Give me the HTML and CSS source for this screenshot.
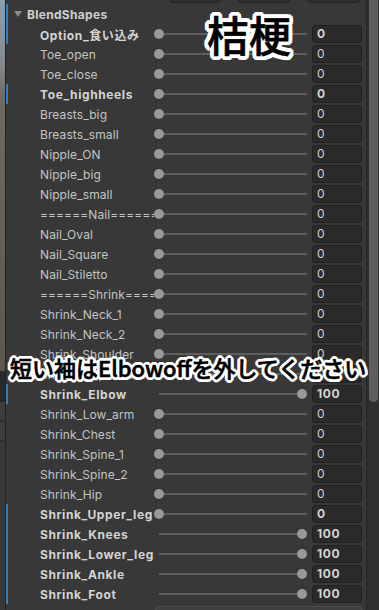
FILE: index.html
```html
<!DOCTYPE html>
<html lang="ja">
  <head>
    <meta charset="UTF-8" />
    <meta name="viewport" content="width=device-width, initial-scale=1.0" />
    <title>BlendShapes</title>
    <link rel="stylesheet" href="styles.css">
  </head>
  <body>
    <div class="scene"></div>
    <main class="inspector">
      <div class="toolbar">
        <span class="tool-btn first"></span>
        <span class="tool-btn"></span>
        <span class="tool-btn"></span>
      </div>
      <div class="row head mod"><span class="arrow"></span><span class="title">BlendShapes</span></div>
      <div class="row mod bold"><span class="label">Option_食い込み</span><div class="slider"><i class="knob"></i></div><span class="field">0</span></div>
      <div class="row"><span class="label">Toe_open</span><div class="slider"><i class="knob"></i></div><span class="field">0</span></div>
      <div class="row"><span class="label">Toe_close</span><div class="slider"><i class="knob"></i></div><span class="field">0</span></div>
      <div class="row mod bold"><span class="label">Toe_highheels</span><div class="slider"><i class="knob"></i></div><span class="field">0</span></div>
      <div class="row"><span class="label">Breasts_big</span><div class="slider"><i class="knob"></i></div><span class="field">0</span></div>
      <div class="row"><span class="label">Breasts_small</span><div class="slider"><i class="knob"></i></div><span class="field">0</span></div>
      <div class="row"><span class="label">Nipple_ON</span><div class="slider"><i class="knob"></i></div><span class="field">0</span></div>
      <div class="row"><span class="label">Nipple_big</span><div class="slider"><i class="knob"></i></div><span class="field">0</span></div>
      <div class="row"><span class="label">Nipple_small</span><div class="slider"><i class="knob"></i></div><span class="field">0</span></div>
      <div class="row"><span class="label">======Nail=========</span><div class="slider"><i class="knob"></i></div><span class="field">0</span></div>
      <div class="row"><span class="label">Nail_Oval</span><div class="slider"><i class="knob"></i></div><span class="field">0</span></div>
      <div class="row"><span class="label">Nail_Square</span><div class="slider"><i class="knob"></i></div><span class="field">0</span></div>
      <div class="row"><span class="label">Nail_Stiletto</span><div class="slider"><i class="knob"></i></div><span class="field">0</span></div>
      <div class="row"><span class="label">======Shrink========</span><div class="slider"><i class="knob"></i></div><span class="field">0</span></div>
      <div class="row"><span class="label">Shrink_Neck_1</span><div class="slider"><i class="knob"></i></div><span class="field">0</span></div>
      <div class="row"><span class="label">Shrink_Neck_2</span><div class="slider"><i class="knob"></i></div><span class="field">0</span></div>
      <div class="row"><span class="label">Shrink_Shoulder</span><div class="slider"><i class="knob"></i></div><span class="field">0</span></div>
      <div class="row"><span class="label">Shrink_Upper_arm</span><div class="slider"><i class="knob"></i></div><span class="field">0</span></div>
      <div class="row mod bold"><span class="label">Shrink_Elbow</span><div class="slider max"><i class="knob"></i></div><span class="field">100</span></div>
      <div class="row"><span class="label">Shrink_Low_arm</span><div class="slider"><i class="knob"></i></div><span class="field">0</span></div>
      <div class="row"><span class="label">Shrink_Chest</span><div class="slider"><i class="knob"></i></div><span class="field">0</span></div>
      <div class="row"><span class="label">Shrink_Spine_1</span><div class="slider"><i class="knob"></i></div><span class="field">0</span></div>
      <div class="row"><span class="label">Shrink_Spine_2</span><div class="slider"><i class="knob"></i></div><span class="field">0</span></div>
      <div class="row"><span class="label">Shrink_Hip</span><div class="slider"><i class="knob"></i></div><span class="field">0</span></div>
      <div class="row mod bold"><span class="label">Shrink_Upper_leg</span><div class="slider"><i class="knob"></i></div><span class="field">0</span></div>
      <div class="row mod bold"><span class="label">Shrink_Knees</span><div class="slider max"><i class="knob"></i></div><span class="field">100</span></div>
      <div class="row mod bold"><span class="label">Shrink_Lower_leg</span><div class="slider max"><i class="knob"></i></div><span class="field">100</span></div>
      <div class="row mod bold"><span class="label">Shrink_Ankle</span><div class="slider max"><i class="knob"></i></div><span class="field">100</span></div>
      <div class="row mod bold"><span class="label">Shrink_Foot</span><div class="slider max"><i class="knob"></i></div><span class="field">100</span></div>
      <div class="row next"><span class="next-field"></span></div>

      <!-- caption overlays -->
      <p class="caption name">桔梗</p>
      <p class="caption note">短い袖はElbowoffを外してください</p>
    </main>
    <div class="scrollbar"><span class="thumb"></span></div>
  </body>
</html>
```

FILE: styles.css
```css
* { box-sizing: border-box; }
html, body { height: 100%; }
body {
  margin: 0;
  background: #383838;
  color: #c4c4c4;
  font-family: Inter, "Noto Sans CJK JP", sans-serif;
  font-size: 12px;
  display: flex;
  overflow: hidden;
}
.scene {
  width: 6px;
  flex: none;
  border-right: 1px solid #232323;
  background: linear-gradient(#8e9db2 0, #868b92 60px, #6e6862 100px, #5c5651 370px, #2a2a2a 372px, #2a2a2a 400px, #1f1f1f 401px, #3c3c3c 402px, #3c3c3c 420px, #1f1f1f 421px, #3c3c3c 422px, #3c3c3c 440px, #1f1f1f 441px, #383838 442px);
}
.inspector {
  flex: 1;
  position: relative;
  padding-top: 4px;
}
.toolbar { position: absolute; top: -10px; left: 164px; display: flex; gap: 18px; }
.tool-btn {
  width: 52px;
  height: 13px;
  background: #2e2e2e;
  border: 1px solid #222;
  border-radius: 3px;
}
.tool-btn.first { width: 50px; }
.row {
  height: 20px;
  display: flex;
  align-items: center;
  border-left: 2px solid transparent;
}
.row.mod { border-left-color: #2f7fc1; }
.head { padding-left: 6px; }
.arrow {
  width: 0;
  height: 0;
  border-left: 4px solid transparent;
  border-right: 4px solid transparent;
  border-top: 6px solid #8a8a8a;
  margin-right: 5px;
}
.title { font-weight: 700; color: #cfcfcf; letter-spacing: 0.3px; }
.label {
  width: 146px;
  padding-left: 32px;
  white-space: nowrap;
  overflow: hidden;
  letter-spacing: 0.1px;
}
.bold .label, .bold .field { font-weight: 700; color: #d4d4d4; letter-spacing: 0.6px; }
.slider {
  width: 153px;
  height: 10px;
  position: relative;
  flex: none;
}
.slider::before {
  content: "";
  position: absolute;
  left: 5px;
  right: 0;
  top: 4px;
  height: 2px;
  background: #5e5e5e;
}
.knob {
  position: absolute;
  left: 0;
  top: 0;
  width: 10px;
  height: 10px;
  border-radius: 50%;
  background: #999;
}
.slider.max .knob { left: auto; right: 0; }
.field {
  margin-left: 5px;
  width: 50px;
  height: 18px;
  background: #2a2a2a;
  border: 1px solid #212121;
  border-radius: 3px;
  padding-left: 4px;
  line-height: 16px;
  color: #d2d2d2;
}
.next { align-items: flex-start; padding-top: 2px; }
.next-field {
  margin-left: 147px;
  width: 207px;
  height: 18px;
  background: #3f3f3f;
  border: 1px solid #4c4c4c;
  border-radius: 3px;
}
.caption {
  position: absolute;
  margin: 0;
  color: #000;
  font-family: "Noto Sans CJK JP", sans-serif;
  font-weight: 500;
  white-space: nowrap;
  -webkit-text-stroke: 0.6px #000;
  text-shadow:
    3px 0 #fff, -3px 0 #fff, 0 3px #fff, 0 -3px #fff,
    2px 2px #fff, -2px 2px #fff, 2px -2px #fff, -2px -2px #fff,
    3px 1px #fff, 3px -1px #fff, -3px 1px #fff, -3px -1px #fff,
    1px 3px #fff, -1px 3px #fff, 1px -3px #fff, -1px -3px #fff,
    0 0 2px #fff;
}
.caption.name {
  left: 201px;
  top: 10px;
  font-size: 42px;
  line-height: 48px;
  text-shadow:
    4px 0 #fff, -4px 0 #fff, 0 4px #fff, 0 -4px #fff,
    3px 3px #fff, -3px 3px #fff, 3px -3px #fff, -3px -3px #fff,
    4px 2px #fff, 4px -2px #fff, -4px 2px #fff, -4px -2px #fff,
    2px 4px #fff, -2px 4px #fff, 2px -4px #fff, -2px -4px #fff,
    0 0 2px #fff;
}
.caption.note { left: 4px; top: 352px; font-size: 22px; line-height: 30px; }
.scrollbar {
  width: 13px;
  flex: none;
  background: #2f2f2f;
  border-left: 1px solid #262626;
  padding: 0 1px 0 2px;
}
.thumb {
  display: block;
  height: 408px;
  margin-top: -6px;
  background: #5e5e5e;
  border-radius: 5px;
}
```
